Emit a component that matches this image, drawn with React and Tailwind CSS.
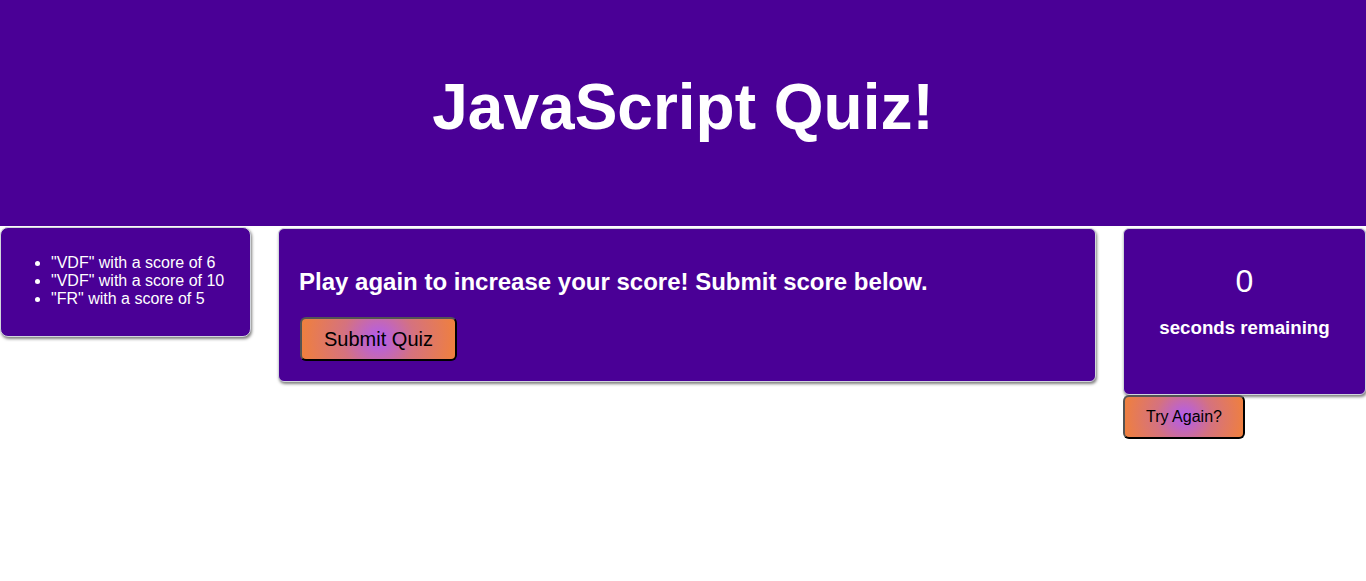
import React from 'react';

const scores = [
    { name: 'VDF', score: 6 },
    { name: 'VDF', score: 10 },
    { name: 'FR', score: 5 },
];

const btn = "rounded-md border-2 border-black [border-style:outset] bg-[radial-gradient(circle,#b15cf2_0%,#d5727f_45%,#f0803c_100%)] text-black";

const App = () => {
    return (
        <div className="min-h-screen bg-white font-['Liberation_Sans',Arial,sans-serif]">
            <header className="h-[226px] bg-[#4a0096] flex items-center justify-center">
                <h1 className="text-[64px] font-bold text-white leading-none -mt-[12px]">JavaScript Quiz!</h1>
            </header>
            <main className="flex justify-between items-start mt-[1px]">
                <div className="w-[251px] bg-[#4a0096] text-white rounded-lg border border-gray-300 shadow-[1px_2px_3px_rgba(0,0,0,0.5)] pt-[26px] pb-[28px] pl-[10px]">
                    <ul className="list-disc pl-[40px] text-base leading-[18px]">
                        {scores.map((s, i) => (
                            <li key={i}>"{s.name}" with a score of {s.score}</li>
                        ))}
                    </ul>
                </div>
                <div className="w-[818px] mt-[1px] bg-[#4a0096] text-white rounded-md border border-gray-300 shadow-[1px_2px_3px_rgba(0,0,0,0.5)] px-[20px] pt-[39px] pb-[20px]">
                    <h2 className="text-[24px] font-bold leading-[28px]">Play again to increase your score! Submit score below.</h2>
                    <button className={btn + " mt-[21px] ml-[1px] w-[157px] h-[44px] text-[20px]"}>Submit Quiz</button>
                </div>
                <div className="w-[243px] mt-[1px] flex flex-col items-start">
                    <div className="w-full h-[167px] bg-[#4a0096] text-white rounded-md border border-gray-300 shadow-[1px_2px_3px_rgba(0,0,0,0.5)] flex flex-col items-center pt-[34px]">
                        <div className="text-[32px] leading-[37px]">0</div>
                        <div className="text-[18.72px] font-bold mt-[17px] leading-[22px]">seconds remaining</div>
                    </div>
                    <button className={btn + " w-[122px] h-[44px] text-base"}>Try Again?</button>
                </div>
            </main>
        </div>
    );
};

export default App;
